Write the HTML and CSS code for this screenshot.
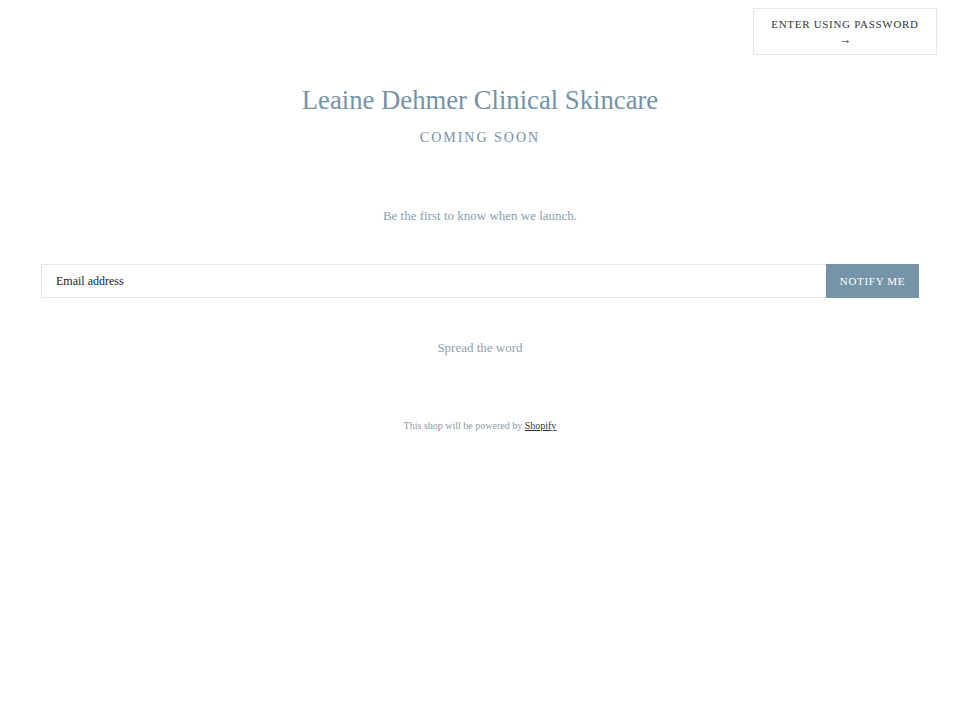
FILE: index.html
```html
<!DOCTYPE html>
<html>
<head>
<meta charset="utf-8">
<link rel="stylesheet" href="styles.css">
</head>
<body>
<header class="topbar">
  <a class="pw-btn" href="#">ENTER USING PASSWORD<br><span class="arrow">→</span></a>
</header>
<main class="main">
  <h1 class="title">Leaine Dehmer Clinical Skincare</h1>
  <h2 class="soon">COMING SOON</h2>
  <p class="lead">Be the first to know when we launch.</p>
  <form class="signup">
    <input class="email" type="email" placeholder="Email address">
    <button class="notify" type="button">NOTIFY ME</button>
  </form>
  <p class="spread">Spread the word</p>
  <p class="powered">This shop will be powered by <a href="#">Shopify</a></p>
</main>
</body>
</html>
```
FILE: styles.css
```css
html, body { margin: 0; padding: 0; background: #fff; }
body { font-family: "Liberation Serif", "DejaVu Serif", serif; color: #7592a6; }
.topbar { display: flex; justify-content: flex-end; padding: 8px 23px 0 0; }
.pw-btn {
  display: block; width: 184px; height: 47px; box-sizing: border-box;
  border: 1px solid #e8e8e8; text-align: center; text-decoration: none;
  color: #333; font-size: 11px; letter-spacing: 0.7px; line-height: 15px; padding-top: 8px;
}
.arrow { font-size: 13px; }
.main { display: flex; flex-direction: column; align-items: center; padding: 0 41px; }
.title { margin: 28px 0 0; font-weight: normal; font-size: 26.7px; line-height: 34px; color: #7592a6; }
.soon { margin: 13px 0 0; font-weight: normal; font-size: 14px; letter-spacing: 2px; line-height: 16px; color: #7592a6; }
.lead { margin: 62px 0 0; font-size: 13px; line-height: 16px; color: #8aa0b0; }
.signup { display: flex; width: 100%; margin-top: 40px; height: 34px; }
.email {
  flex: 1; border: 1px solid #e6e6e6; border-right: none; padding: 0 14px; font-family: inherit;
  font-size: 12px; color: #222; outline: none; height: 34px; box-sizing: border-box;
}
.email::placeholder { color: #222; }
.notify {
  width: 93px; height: 34px; border: none; background: #7694a8; color: #fff;
  font-family: inherit; font-size: 11px; letter-spacing: 0.7px; padding: 0;
}
.spread { margin: 42px 0 0; font-size: 13px; line-height: 16px; color: #8aa0b0; }
.powered { margin: 64px 0 0; font-size: 10px; line-height: 12px; color: #8a9aa8; }
.powered a { color: #333; }
```
